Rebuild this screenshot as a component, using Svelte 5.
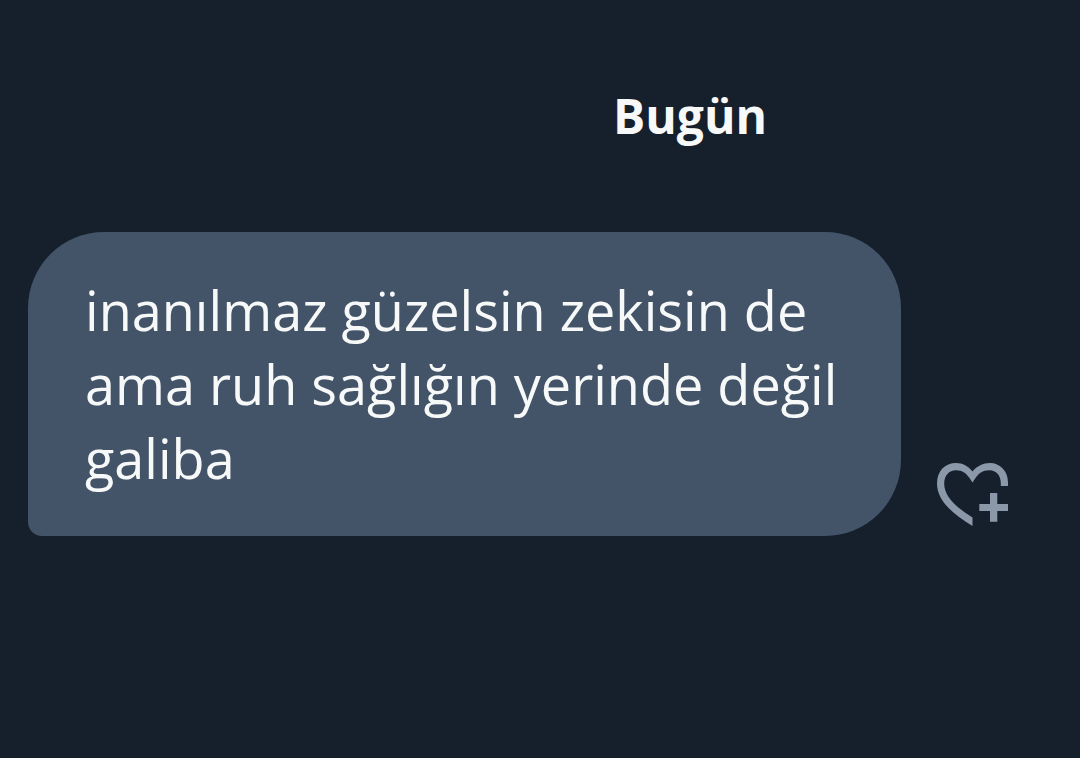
<script lang="ts">
	type Message = {
		id: number;
		text: string;
	};

	const day = 'Bugün';
	const messages: Message[] = [
		{ id: 1, text: 'inanılmaz güzelsin zekisin de ama ruh sağlığın yerinde değil galiba' }
	];
</script>

<main class="conversation">
	<h2 class="day">{day}</h2>

	{#each messages as message (message.id)}
		<div class="message">
			<p class="bubble">{message.text}</p>
			<button class="react" type="button" aria-label="Tepki ekle">
				<svg viewBox="0 0 71 63" aria-hidden="true">
					<path
						d="M35.5 63C13 49.500 0 36 0 20.500C0 8 8 0 19 0C26 0 31 3 35.500 8.500C40 3 46 0 53 0C63 0 71 8 71 19.500V23H63.800V20C63.800 12 59 7.200 52.500 7.200C45.500 7.200 41.500 10.500 38.500 15L35.500 19.500L32.500 15C29.500 10.500 25.500 7.200 19 7.200C12 7.200 7.200 12.500 7.200 20.500C7.200 32.500 17 43 35.500 54.500Z"
					/>
					<path d="M53 30H60.300V41H71V48H60.300V58.700H53V48H42.300V41H53Z" />
				</svg>
			</button>
		</div>
	{/each}
</main>

<style>
	:global(body) {
		margin: 0;
		background: #16202c;
	}

	.conversation {
		padding: 84px 72px 84px 28px;
		color: #f7f9f9;
		font-family: 'Open Sans', 'Noto Sans', sans-serif;
	}

	.day {
		margin: 0 -72px 84px 272px;
		font-size: 48px;
		font-weight: 700;
		line-height: 64px;
		text-align: center;
	}

	.message {
		display: flex;
		align-items: flex-end;
		gap: 36px;
	}

	.bubble {
		flex: 1;
		margin: 0;
		padding: 41px 40px 41px 57px;
		border-radius: 76px 76px 76px 14px;
		background: #435368;
		font-size: 54px;
		line-height: 74px;
	}

	.react {
		flex: none;
		margin: 0 0 10px;
		padding: 0;
		border: 0;
		background: none;
		color: #8b98a9;
		cursor: pointer;
	}

	.react svg {
		display: block;
		width: 71px;
		fill: currentColor;
	}
</style>
